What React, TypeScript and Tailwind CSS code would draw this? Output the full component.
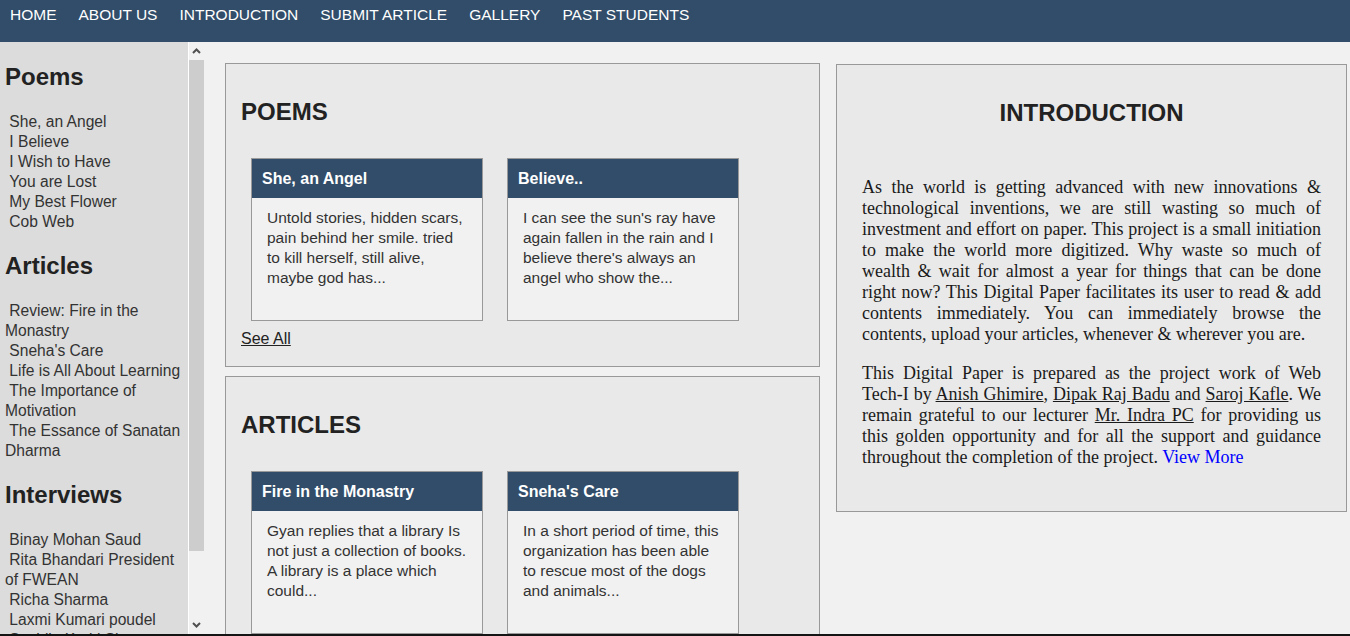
import React from 'react';

const navItems = ['HOME', 'ABOUT US', 'INTRODUCTION', 'SUBMIT ARTICLE', 'GALLERY', 'PAST STUDENTS'];

const sideMenu = [
    {
        title: 'Poems',
        items: ['She, an Angel', 'I Believe', 'I Wish to Have', 'You are Lost', 'My Best Flower', 'Cob Web'],
    },
    {
        title: 'Articles',
        items: [
            'Review: Fire in the Monastry',
            "Sneha's Care",
            'Life is All About Learning',
            'The Importance of Motivation',
            'The Essance of Sanatan Dharma',
        ],
    },
    {
        title: 'Interviews',
        items: [
            'Binay Mohan Saud',
            'Rita Bhandari President of FWEAN',
            'Richa Sharma',
            'Laxmi Kumari poudel',
            'Sushila Karki Sharma',
            'Ram Bahadur Thapa',
        ],
    },
];

const poems = [
    {
        title: 'She, an Angel',
        text: 'Untold stories, hidden scars, pain behind her smile. tried to kill herself, still alive, maybe god has...',
    },
    {
        title: 'Believe..',
        text: "I can see the sun's ray have again fallen in the rain and I believe there's always an angel who show the...",
    },
];

const articles = [
    {
        title: 'Fire in the Monastry',
        text: 'Gyan replies that a library Is not just a collection of books. A library is a place which could...',
    },
    {
        title: "Sneha's Care",
        text: 'In a short period of time, this organization has been able to rescue most of the dogs and animals...',
    },
];

function Chevron({ up }: { up?: boolean }) {
    return (
        <svg width="9" height="6" viewBox="0 0 9 6">
            <polyline
                points={up ? '1,5 4.5,1.5 8,5' : '1,1 4.5,4.5 8,1'}
                fill="none"
                stroke="#505050"
                strokeWidth="2"
            />
        </svg>
    );
}

function Card({ title, text }: { title: string; text: string }) {
    return (
        <div className="w-[232px] h-[163px] shrink-0 border border-[#999] bg-[#f1f1f1] flex flex-col">
            <div className="h-[39px] bg-[#314d69] text-white font-bold text-[16px] leading-5 px-[10px] flex items-center">
                {title}
            </div>
            <div className="pl-[15px] pr-[13px] pt-[10px] text-[15.5px] leading-5 text-[#333]">{text}</div>
        </div>
    );
}

function Section({ title, cards }: { title: string; cards: { title: string; text: string }[] }) {
    return (
        <div className="border border-[#999] bg-[#e9e9e9] px-[15px] pt-[34px] pb-[18px]">
            <h2 className="text-[24px] leading-[28px] font-bold text-[#222]">{title}</h2>
            <div className="flex gap-[24px] ml-[10px] mt-[32px]">
                {cards.map((c) => (
                    <Card key={c.title} {...c} />
                ))}
            </div>
            <a className="block mt-[9px] text-[16px] leading-[18px] text-[#222] underline">See All</a>
        </div>
    );
}

export default function App() {
    return (
        <div className="h-[636px] w-[1350px] overflow-hidden flex flex-col bg-[#f1f1f1] font-['Liberation_Sans',Arial,sans-serif]">
            {/* top nav */}
            <nav className="h-[42px] shrink-0 bg-[#314d69] flex gap-[22px] pl-[10px] pt-[6px] text-white text-[15.5px] leading-[18px]">
                {navItems.map((n) => (
                    <a key={n}>{n}</a>
                ))}
            </nav>

            <div className="flex flex-1 min-h-0">
                {/* side menu */}
                <aside className="w-[188px] shrink-0 bg-[#dcdcdc] overflow-hidden pl-[5px] pt-[1px] text-[#333]">
                    {sideMenu.map((s) => (
                        <div key={s.title}>
                            <h2 className="text-[24px] leading-[28px] font-bold text-[#222] mt-[20px] mb-[21px]">
                                {s.title}
                            </h2>
                            {s.items.map((item) => (
                                <div key={item} className="text-[15.6px] leading-5">
                                    {'\u00a0'}
                                    {item}
                                </div>
                            ))}
                        </div>
                    ))}
                </aside>

                {/* scrollbar of side menu */}
                <div className="w-[16px] shrink-0 border-l border-white bg-[#f1f1f1] flex flex-col">
                    <div className="h-[18px] flex items-center justify-center">
                        <Chevron up />
                    </div>
                    <div className="flex-1">
                        <div className="h-[491px] bg-[#cdcdcd]" />
                    </div>
                    <div className="h-[18px] flex items-center justify-center">
                        <Chevron />
                    </div>
                </div>

                {/* main content */}
                <main className="flex-1 min-w-0 overflow-hidden pl-[21px] pt-[21px] flex items-start gap-[16px]">
                    <div className="w-[595px] shrink-0 flex flex-col gap-[9px]">
                        <Section title="POEMS" cards={poems} />
                        <Section title="ARTICLES" cards={articles} />
                    </div>

                    <div className="w-[511px] shrink-0 mt-[1px] border border-[#999] bg-[#e9e9e9] px-[25px] pt-[34px] pb-[43px]">
                        <h2 className="text-[24px] leading-[28px] font-bold text-[#222] text-center">INTRODUCTION</h2>
                        <div className="mt-[50px] font-['Liberation_Serif','Times_New_Roman',serif] text-[18px] leading-[21px] text-[#1a1a1a] text-justify">
                            <p>
                                As the world is getting advanced with new innovations &amp; technological inventions, we
                                are still wasting so much of investment and effort on paper. This project is a small
                                initiation to make the world more digitized. Why waste so much of wealth &amp; wait for
                                almost a year for things that can be done right now? This Digital Paper facilitates its
                                user to read &amp; add contents immediately. You can immediately browse the contents,
                                upload your articles, whenever &amp; wherever you are.
                            </p>
                            <p className="mt-[18px]">
                                This Digital Paper is prepared as the project work of Web{' '}
                                <span className="whitespace-nowrap">Tech-I</span> by{' '}
                                <a className="underline">Anish Ghimire</a>, <a className="underline">Dipak Raj Badu</a>{' '}
                                and <a className="underline">Saroj Kafle</a>. We remain grateful to our lecturer{' '}
                                <a className="underline">Mr. Indra PC</a> for providing us this golden opportunity and for
                                all the support and guidance throughout the completion of the project.{' '}
                                <a className="text-[#0000ff]">View More</a>
                            </p>
                        </div>
                    </div>
                </main>
            </div>

            <div className="h-[2px] shrink-0 bg-[#141414]" />
        </div>
    );
}
